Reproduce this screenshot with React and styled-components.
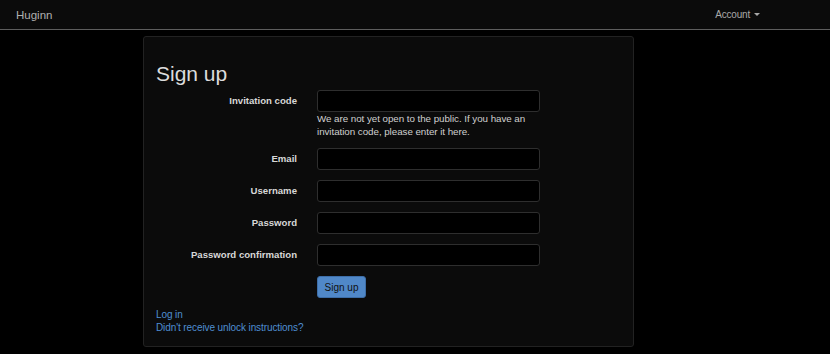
import React from 'react'
import styled, { createGlobalStyle } from 'styled-components';

const Global = createGlobalStyle`
  body {
    margin: 0;
    background: #000;
    font-family: "Liberation Sans", Arial, sans-serif;
    color: #ddd;
  }
`;
const Navbar = styled.div`
  height: 29px;
  background-color: #0b0b0b;
  border-bottom: 1px solid #5e5e5e;
  display: flex;
  align-items: center;
  justify-content: space-between;
  padding: 0 70px 0 16px;
  font-size: 10px;
`;
const Brand = styled.div`
  font-size: 11.5px;
  color: #b0b0b0;
`;
const Account = styled.div`
  color: #a8a8a8;
  display: flex;
  align-items: center;
  gap: 4px;
  letter-spacing: -0.2px;
`;
const Caret = styled.span`
  width: 0;
  height: 0;
  border-left: 3px solid transparent;
  border-right: 3px solid transparent;
  border-top: 3px solid #a8a8a8;
`;
const Main = styled.div`
  padding: 6px 0 0 143px;
`;
const Card = styled.div`
  width: 464px;
  background-color: #0b0b0b;
  border: 1px solid #222;
  border-radius: 3px;
  padding: 25px 13px 12px 12px;
`;
const Title = styled.h1`
  font-size: 21px;
  font-weight: normal;
  color: #dcdcdc;
  margin: 0 0 4px;
  line-height: 24px;
`;
const Row = styled.div`
  display: grid;
  grid-template-columns: 141px 223px;
  column-gap: 20px;
  margin-bottom: 10px;
`;
const Label = styled.label`
  font-size: 9.6px;
  font-weight: bold;
  color: #d8d8d8;
  text-align: right;
  line-height: 22px;
`;
const Field = styled.div`
  display: flex;
  flex-direction: column;
`;
const Input = styled.input`
  box-sizing: border-box;
  width: 223px;
  height: 22px;
  background: #000;
  border: 1px solid #2e2e2e;
  border-radius: 3px;
  outline: none;
`;
const Help = styled.p`
  font-size: 9.8px;
  letter-spacing: -0.05px;
  line-height: 13px;
  color: #d0d0d0;
  margin: 0;
`;
const Button = styled.button`
  width: 49px;
  height: 22px;
  background: #5088c8;
  border: 1px solid #3d6ea8;
  border-radius: 3px;
  color: #111;
  font-family: inherit;
  font-size: 10px;
  padding: 0;
`;
const Links = styled.div`
  display: flex;
  flex-direction: column;
`;
const A = styled.a`
  color: #4f8ed2;
  font-size: 10px;
  letter-spacing: -0.1px;
  line-height: 13px;
  text-decoration: none;
`;

const fields = [
  { label: 'Email', type: 'email' },
  { label: 'Username', type: 'text' },
  { label: 'Password', type: 'password' },
  { label: 'Password confirmation', type: 'password' },
];

const App = () => {
  return (
    <>
      <Global/>
      <Navbar>
        <Brand>Huginn</Brand>
        <Account>Account <Caret/></Account>
      </Navbar>
      <Main>
        <Card>
          <Title>Sign up</Title>
          <Row>
            <Label>Invitation code</Label>
            <Field>
              <Input type="text"/>
              <Help>We are not yet open to the public. If you have an invitation code, please enter it here.</Help>
            </Field>
          </Row>
          {fields.map((f) => (
            <Row key={f.label}>
              <Label>{f.label}</Label>
              <Field><Input type={f.type}/></Field>
            </Row>
          ))}
          <Row>
            <span/>
            <Field><Button>Sign up</Button></Field>
          </Row>
          <Links>
            <A href="#">Log in</A>
            <A href="#">Didn't receive unlock instructions?</A>
          </Links>
        </Card>
      </Main>
    </>
  )
}

export default App
